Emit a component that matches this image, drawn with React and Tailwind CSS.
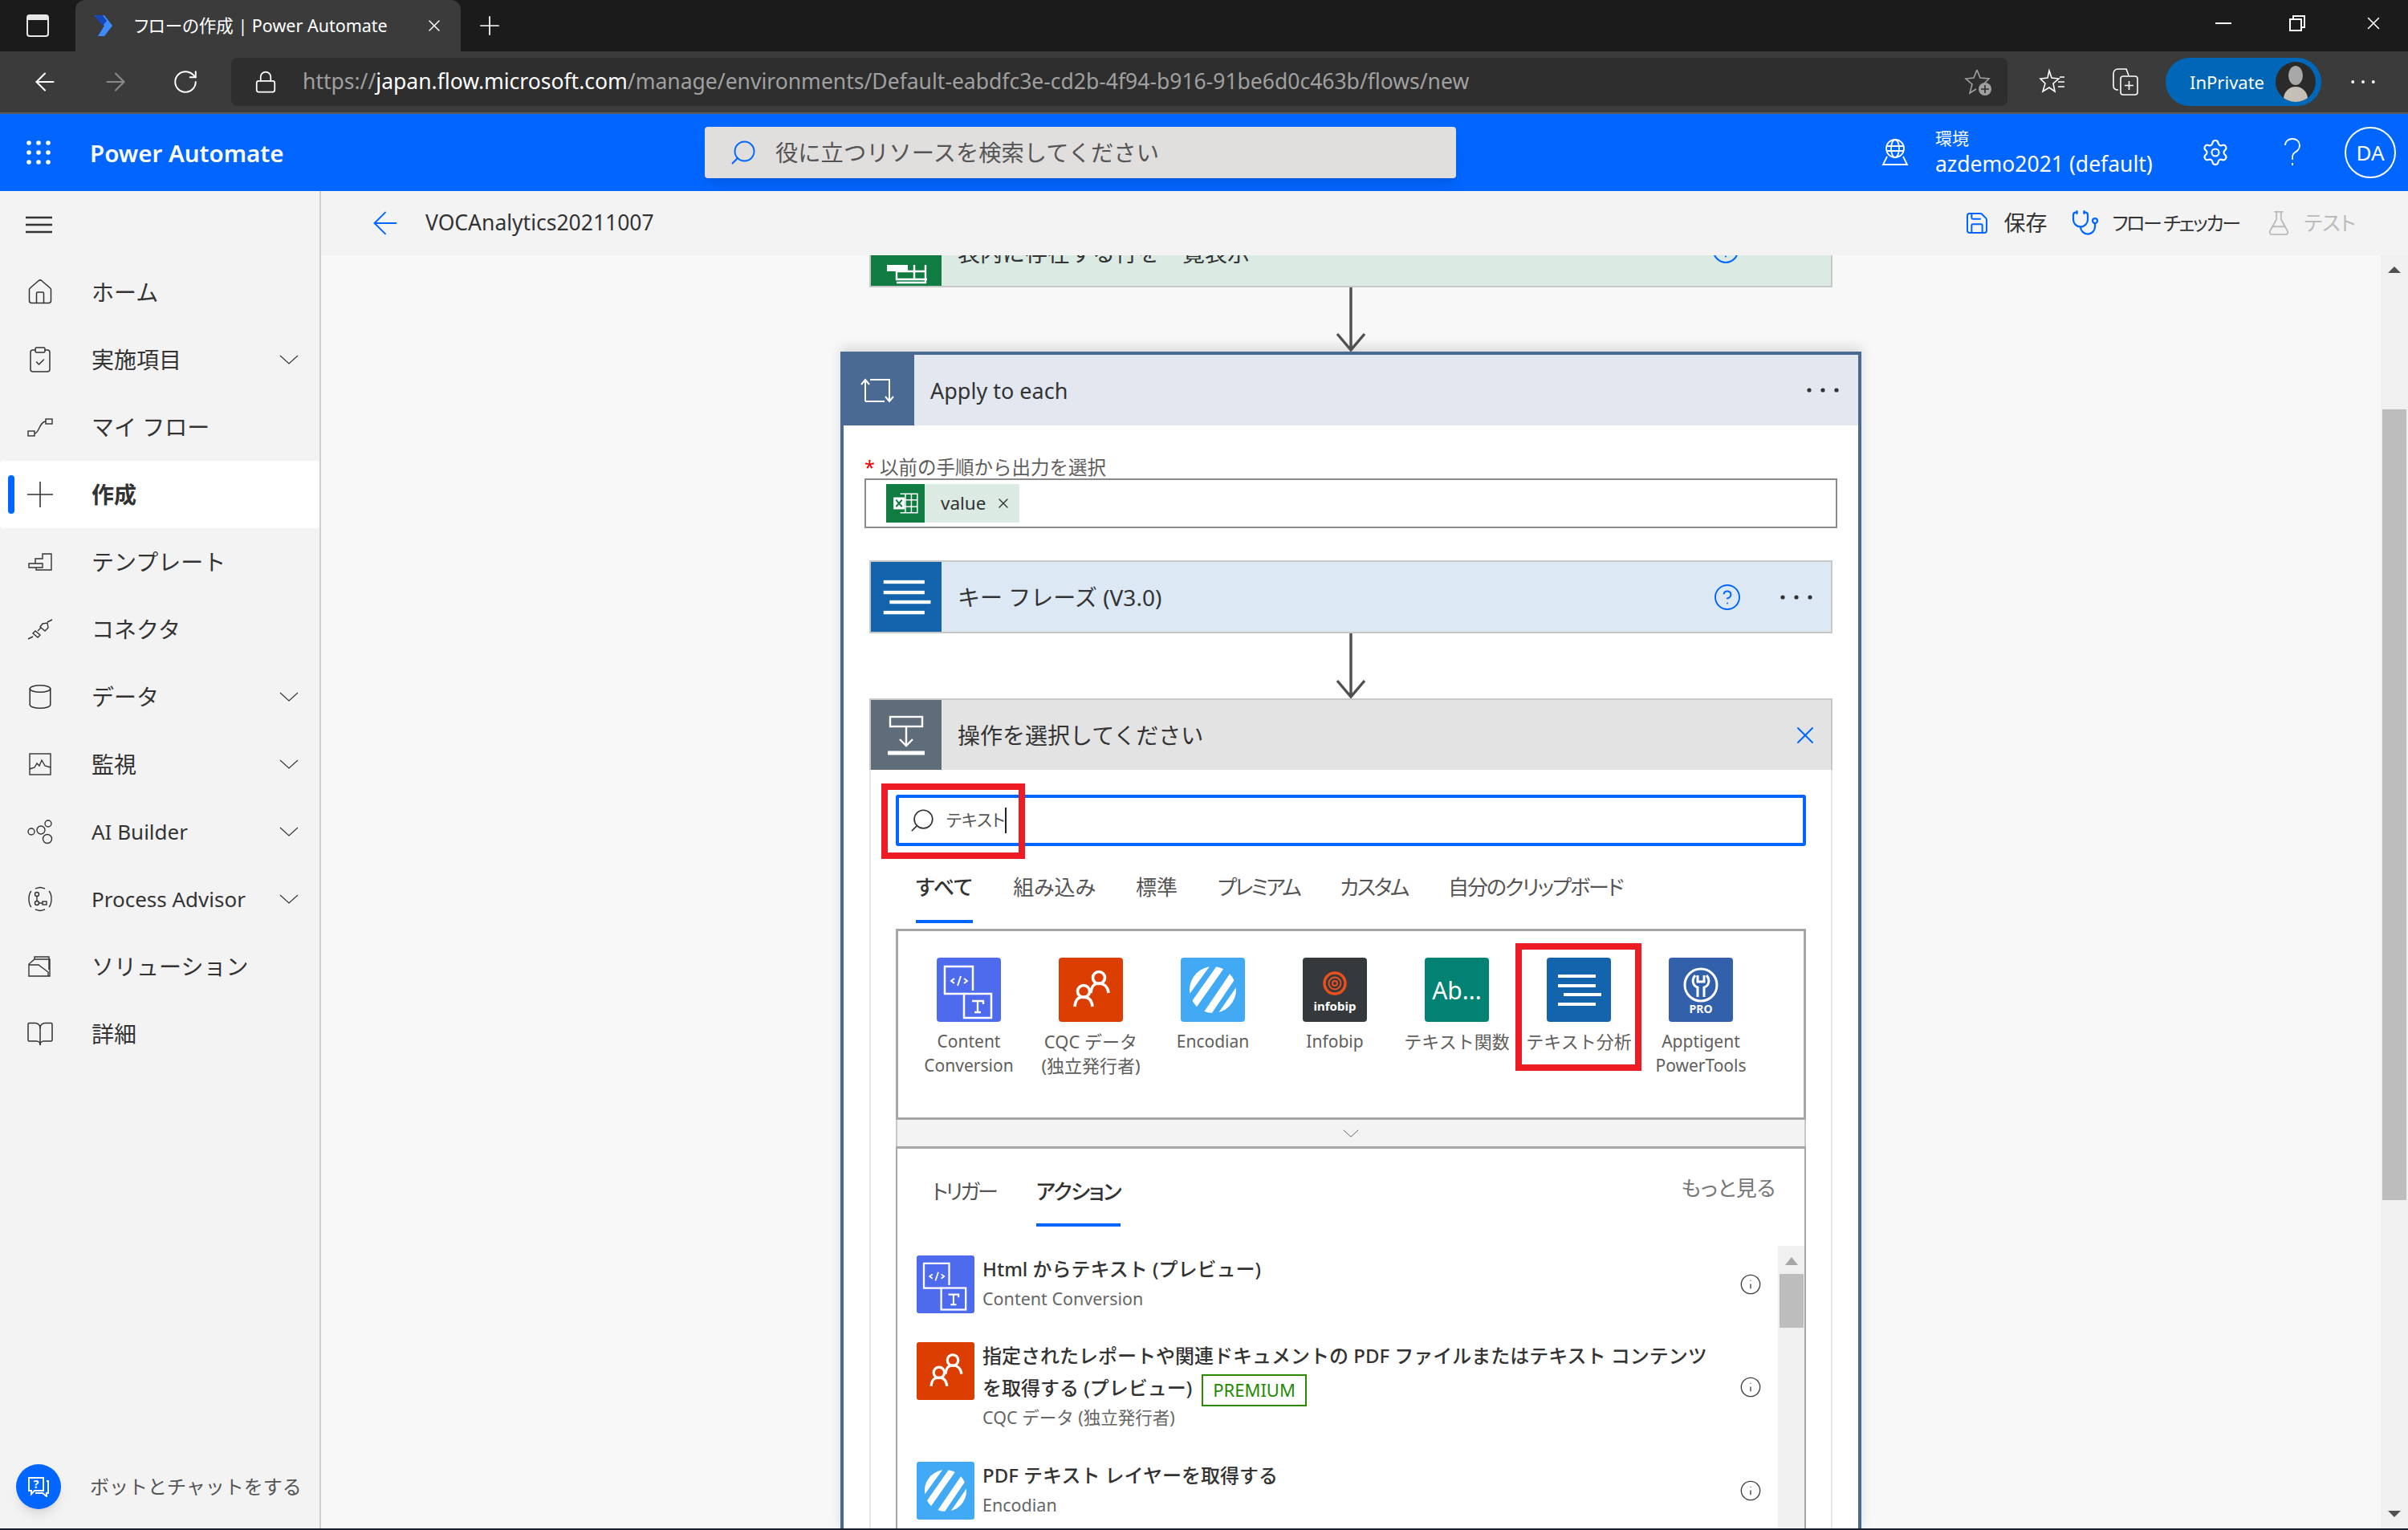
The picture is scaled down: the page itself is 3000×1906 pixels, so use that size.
import React from 'react';
import {
  ArrowLeft, ArrowRight, RotateCw, Lock, X, Plus, Home, ClipboardCheck, Cylinder, BookOpen,
  Settings, HelpCircle, Search, Save, Stethoscope, FlaskConical, Info,
} from 'lucide-react';

const NAV = [
  { label: 'ホーム', icon: <Home size={36} strokeWidth={1} /> },
  { label: '実施項目', icon: <ClipboardCheck size={36} strokeWidth={1} />, more: true },
  { label: 'マイ フロー', icon: <FlowIcon /> },
  { label: '作成', icon: <PlusThin />, active: true },
  { label: 'テンプレート', icon: <TemplateIcon /> },
  { label: 'コネクタ', icon: <PlugIcon /> },
  { label: 'データ', icon: <Cylinder size={34} strokeWidth={1.1} />, more: true },
  { label: '監視', icon: <MonitorIcon />, more: true },
  { label: 'AI Builder', icon: <BuilderIcon />, more: true, latin: true },
  { label: 'Process Advisor', icon: <AdvisorIcon />, more: true, latin: true },
  { label: 'ソリューション', icon: <SolutionIcon /> },
  { label: '詳細', icon: <BookOpen size={36} strokeWidth={1} /> },
];

function PlusThin() {
  return (
    <svg width="32" height="32" viewBox="0 0 32 32" stroke="currentColor" strokeWidth="1.6"><path d="M0 16h32M16 0v32" /></svg>
  );
}
function Chev({ width = 24, className = '' }) {
  return (
    <svg width={width} height={width / 2} viewBox="0 0 24 12" fill="none" stroke="currentColor" strokeWidth="1.1" className={className}><path d="M1 1l11 10L23 1" /></svg>
  );
}
function FlowIcon() {
  return (
    <svg width="32" height="32" viewBox="0 0 32 32" fill="none" stroke="currentColor" strokeWidth="1.4">
      <rect x="1" y="21" width="8" height="6" /><rect x="23" y="6" width="8" height="6" /><path d="M9 24c6 0 6-15 14-15" />
    </svg>
  );
}
function TemplateIcon() {
  return (
    <svg width="32" height="32" viewBox="0 0 32 32" fill="none" stroke="currentColor" strokeWidth="1.4">
      <path d="M2 23v-5h8v-6h9V6h11v20H11v-3zM11 23h8v-5h-9" />
    </svg>
  );
}
function PlugIcon() {
  return (
    <svg width="32" height="32" viewBox="0 0 32 32" fill="none" stroke="currentColor" strokeWidth="1.4">
      <path d="M1 28l6-3M31 4l-6 3M7 21l6 5 3-3-6-5zM16 13l6 5 4-4-1-6-6 1zM13 18l4-4" />
    </svg>
  );
}
function MonitorIcon() {
  return (
    <svg width="30" height="30" viewBox="0 0 30 30" fill="none" stroke="currentColor" strokeWidth="1.4">
      <rect x="2" y="2" width="26" height="26" /><path d="M2 21l6-2 3-5 3 3 3-7 4 7 7 2" />
    </svg>
  );
}
function BuilderIcon() {
  return (
    <svg width="34" height="34" viewBox="0 0 34 34" fill="none" stroke="currentColor" strokeWidth="1.4">
      <circle cx="6" cy="17" r="4" /><circle cx="18" cy="15" r="5" /><circle cx="27" cy="7" r="4" /><circle cx="26" cy="26" r="5.5" />
    </svg>
  );
}
function AdvisorIcon() {
  return (
    <svg width="34" height="34" viewBox="0 0 34 34" fill="none" stroke="currentColor" strokeWidth="1.4">
      <path d="M6 7C2 11 2 23 6 27M28 7c4 4 4 16 0 20M11 4c7-2 5-2 12 0M11 30c7 2 5 2 12 0" />
      <circle cx="13" cy="11" r="2.5" /><circle cx="13" cy="22" r="2.5" /><rect x="20" y="20" width="5" height="4" /><path d="M13 14v5M15 22h5" />
    </svg>
  );
}
function SolutionIcon() {
  return (
    <svg width="32" height="32" viewBox="0 0 32 32" fill="none" stroke="currentColor" strokeWidth="1.4">
      <path d="M2 28V13L9 7h19v21zM9 7v-3h18v16M2 14h12l12 9v5" />
    </svg>
  );
}
function DotsGrid({ className }) {
  return (
    <svg width="30" height="30" viewBox="0 0 30 30" fill="currentColor" className={className}>
      {[3, 15, 27].flatMap(y => [3, 15, 27].map(x => <circle key={`${x}-${y}`} cx={x} cy={y} r="2.8" />))}
    </svg>
  );
}
function DownArrow({ height }) {
  return (
    <svg width="38" height={height} viewBox={`0 0 38 ${height}`} fill="none" stroke="#505050" strokeWidth="3.4" className="mx-auto block">
      <path d={`M19 0V${height - 2}M2 ${height - 22}L19 ${height - 2}L36 ${height - 22}`} />
    </svg>
  );
}
function Dots({ className = '', fill = '#333' }) {
  return (
    <svg width="40" height="8" viewBox="0 0 40 8" fill={fill} className={className}>
      <circle cx="3" cy="4" r="2.6" /><circle cx="20" cy="4" r="2.6" /><circle cx="37" cy="4" r="2.6" />
    </svg>
  );
}
function ExcelMark({ size }) {
  return (
    <svg width={size} height={size} viewBox="0 0 32 32" fill="none" stroke="#fff" strokeWidth="1.4">
      <path d="M10 5h20v22H10M16 5v22M23 5v22M10 12h20M10 20h20" />
      <rect x="2" y="9" width="13" height="14" fill="#fff" stroke="none" />
      <path d="M5 12l7 8M12 12l-7 8" stroke="#107c41" strokeWidth="1.8" />
    </svg>
  );
}
function LoopIcon() {
  return (
    <svg width="42" height="32" viewBox="0 0 42 32" fill="none" stroke="#fff" strokeWidth="2">
      <path d="M6 30V3M1 9l5-6 5 6M12 3h24v27M31 24l5 6 5-6M30 30H6" />
    </svg>
  );
}
function QuestionMark() {
  return (
    <svg width="22" height="36" viewBox="0 0 22 36" fill="none" stroke="#fff" strokeWidth="1.8">
      <path d="M2 9c0-5 4-8 9-8s9 3 9 8-3 7-6 9-3 4-3 9M11 31v3" />
    </svg>
  );
}
function GlobeIcon() {
  return (
    <svg width="34" height="34" viewBox="0 0 34 34" fill="none" stroke="#fff" strokeWidth="1.8" className="ml-[530px] shrink-0">
      <circle cx="17" cy="12" r="11" /><ellipse cx="17" cy="12" rx="5" ry="11" /><path d="M6 9h22M6 15h22M7 22L2 32h30l-5-10" />
    </svg>
  );
}

/* ブラウザのツールバーアイコン */
function FavAddIcon() {
  return (
    <svg width="36" height="36" viewBox="0 0 36 36" fill="none" stroke="#a0a0a0" strokeWidth="1.6" className="mr-[18px]">
      <path d="M16 3l4 10 11 1-6 6" /><path d="M16 3l-4 10-10 1 8 7-3 11 8-5" />
      <circle cx="26" cy="27" r="8" fill="#a0a0a0" stroke="none" /><path d="M26 22v10M21 27h10" stroke="#2e2e2e" strokeWidth="1.6" />
    </svg>
  );
}
function FavListIcon() {
  return (
    <svg width="34" height="34" viewBox="0 0 34 34" fill="none" stroke="#fff" strokeWidth="1.6" className="ml-[39px] shrink-0">
      <path d="M13 3l3 9 9 1-7 6 2 10-7-5-8 5 3-10-6-6 9-1zM24 17h8M24 23h8M26 11h6" />
    </svg>
  );
}
function CollectionsIcon() {
  return (
    <svg width="34" height="36" viewBox="0 0 34 36" fill="none" stroke="#fff" strokeWidth="1.6" className="ml-[57px] shrink-0">
      <path d="M8 28c-4 0-6-2-6-5V8c0-3 2-6 6-6h10l3 8" />
      <rect x="11" y="11" width="21" height="23" rx="3" /><path d="M21.500 17v11M16 22.500h11" />
    </svg>
  );
}

/* コネクタのロゴ */
function ContentIcon() {
  return (
    <svg viewBox="0 0 80 80" className="h-full w-full" fill="none" stroke="#fff">
      <path d="M34 45H10V11h35v30" strokeWidth="2.5" />
      <rect x="34" y="45" width="34" height="30" strokeWidth="2.5" />
      <path d="M22 26l-4 3 4 3M34 26l4 3-4 3M30 23l-4 12" strokeWidth="2" />
      <path d="M44 54h14v4M51 54v14M47 68h8" strokeWidth="2.3" />
    </svg>
  );
}
function CqcIcon() {
  return (
    <svg viewBox="0 0 80 80" className="h-full w-full" fill="none" stroke="#fff" strokeWidth="3.6">
      <circle cx="50" cy="25" r="7.5" /><path d="M40 44c1-10 5-12 10-12s11 3 12 12" />
      <circle cx="31" cy="42" r="7.5" /><path d="M20 61c1-10 5-12 11-12s10 3 11 12" />
    </svg>
  );
}
function EncodianIcon() {
  return (
    <svg viewBox="0 0 80 80" className="h-full w-full">
      <defs>
        <clipPath id="enc"><circle cx="40" cy="40" r="29" /></clipPath>
      </defs>
      <g clipPath="url(#enc)" stroke="#fff" strokeWidth="9">
        <path d="M2 50L34 6M14 62L52 8M30 74L68 18M46 78L78 32" />
      </g>
    </svg>
  );
}
function InfobipIcon() {
  return (
    <div className="flex h-full w-full flex-col items-center justify-center">
      <svg viewBox="0 0 32 32" className="mt-1 h-8 w-8" fill="none" stroke="#e8501e">
        <circle cx="16" cy="16" r="13" strokeWidth="3.5" /><circle cx="16" cy="16" r="7.5" strokeWidth="2" /><circle cx="16" cy="16" r="3" strokeWidth="2" />
      </svg>
      <span className="mt-1 text-[15px] leading-4 font-bold text-white">infobip</span>
    </div>
  );
}
function KeyLines() {
  return (
    <svg viewBox="0 0 80 80" className="h-full w-full" fill="#fff">
      <rect x="14" y="21" width="47" height="4" /><rect x="14" y="33" width="47" height="4" />
      <rect x="21" y="44" width="47" height="4" /><rect x="14" y="56" width="47" height="4" />
    </svg>
  );
}
function ApptigentIcon() {
  return (
    <div className="flex h-full w-full flex-col items-center pt-3">
      <svg viewBox="0 0 44 44" className="h-11 w-11" fill="none" stroke="#fff" strokeWidth="3">
        <circle cx="22" cy="22" r="20" />
        <path d="M15 10c-5 6-3 13 3 15v12M29 10c5 6 3 13-3 15v12M18 10v8h8v-8" />
      </svg>
      <span className="text-[14px] leading-4 font-bold text-white">PRO</span>
    </div>
  );
}

const CONNECTORS = [
  { name: ['Content', 'Conversion'], bg: 'bg-[#4f6bed]', logo: <ContentIcon />, size: 'text-[21px]' },
  { name: ['CQC データ', '(独立発行者)'], bg: 'bg-[#dc3d00]', logo: <CqcIcon />, size: 'text-[22px]' },
  { name: ['Encodian'], bg: 'bg-[#42a9f5]', logo: <EncodianIcon />, size: 'text-[21px]' },
  { name: ['Infobip'], bg: 'bg-[#36393c]', logo: <InfobipIcon />, size: 'text-[21px]' },
  { name: ['テキスト関数'], bg: 'bg-[#018272]', logo: <span className="flex h-full items-center justify-center text-[30px] text-white">Ab...</span>, size: 'text-[22px]' },
  { name: ['テキスト分析'], bg: 'bg-[#1464ad]', logo: <KeyLines />, size: 'text-[22px]' },
  { name: ['Apptigent', 'PowerTools'], bg: 'bg-[#3360ab]', logo: <ApptigentIcon />, size: 'text-[21px]' },
];

function ActionRow({ bg, logo, title, sub, className }) {
  return (
    <div className={`flex gap-[10px] ${className}`}>
      <div className={`h-[72px] w-[72px] shrink-0 rounded-[3px] ${bg}`}>{logo}</div>
      <div className="-mt-[3px] w-[905px] shrink-0">
        <div className="text-[24px] leading-[40px] whitespace-nowrap text-[#333] [font-weight:500]">{title}</div>
        <div className="text-[21.5px] leading-[34px] text-[#666]">{sub}</div>
      </div>
      <Info size={28} strokeWidth={1.2} className="ml-[28px] shrink-0 self-center text-[#444]" />
    </div>
  );
}

export default function App() {
  return (
    <div className="flex h-[1906px] w-[3000px] flex-col overflow-hidden bg-[#f8f8f8] text-[#333] [font-family:'Noto_Sans','Noto_Sans_CJK_JP',sans-serif]">
      {/* ブラウザ */}
      <div className="flex h-16 shrink-0 items-end bg-[#1b1b1b] text-white">
        <div className="flex h-16 w-[94px] shrink-0 items-center justify-center">
          <div className="h-7 w-7 rounded-[4px] border-2 border-[#e8e8e8] border-t-[7px]" />
        </div>
        <div className="flex h-16 w-[480px] shrink-0 items-center rounded-t-xl bg-[#3b3b3b] px-[21px]">
          <svg width="33" height="26" viewBox="0 0 33 26" className="shrink-0">
            <path d="M2 0h13l10 13-10 13H7l8-13z" fill="#3d8bfd" /><path d="M2 0h11l5 7-5 6z" fill="#1746b8" />
          </svg>
          <span className="ml-[19px] flex-1 text-[21.5px] whitespace-nowrap [font-feature-settings:'palt']">フローの作成 | Power Automate</span>
          <X size={24} strokeWidth={1.5} />
        </div>
        <div className="flex h-16 w-[72px] shrink-0 items-center justify-center"><Plus size={38} strokeWidth={1.1} /></div>
        <div className="flex-1" />
        <div className="flex h-16 items-center gap-[72px] pr-[30px] pb-[6px]">
          <div className="h-[2px] w-5 bg-white" />
          <svg width="20" height="20" viewBox="0 0 20 20" fill="none" stroke="#fff" strokeWidth="2"><rect x="1" y="5" width="14" height="14" /><path d="M5 5V1h14v14h-4" /></svg>
          <X size={26} strokeWidth={1.4} />
        </div>
      </div>
      <div className="flex h-[78px] shrink-0 items-center border-b-2 border-[#5a5a5a] bg-[#3b3b3b] text-white">
        <div className="flex w-[288px] shrink-0 items-center gap-[52px] pl-[38px]">
          <ArrowLeft size={36} strokeWidth={1.4} />
          <ArrowRight size={36} strokeWidth={1.4} className="text-[#8a8a8a]" />
          <RotateCw size={34} strokeWidth={1.4} />
        </div>
        <div className="flex h-[60px] w-[2213px] shrink-0 items-center rounded-lg bg-[#2e2e2e]">
          <Lock size={30} strokeWidth={1.4} className="ml-[28px]" />
          <span className="ml-[31px] flex-1 text-[26.5px] whitespace-nowrap text-[#a0a0a0]">
            https://<span className="text-white">japan.flow.microsoft.com</span>/manage/environments/Default-eabdfc3e-cd2b-4f94-b916-91be6d0c463b/flows/new
          </span>
          <FavAddIcon />
        </div>
        <FavListIcon />
        <CollectionsIcon />
        <div className="ml-[33px] flex h-[60px] w-[194px] shrink-0 items-center rounded-full bg-[#0067b8] pl-[30px] text-[22px]">
          InPrivate
          <svg width="50" height="50" viewBox="0 0 50 50" className="ml-[14px] shrink-0">
            <defs><clipPath id="ava"><circle cx="25" cy="25" r="25" /></clipPath></defs>
            <g clipPath="url(#ava)">
              <rect width="50" height="50" fill="#2a2a2a" />
              <ellipse cx="25" cy="17" rx="9" ry="12" fill="#a8a8a8" />
              <ellipse cx="25" cy="46" rx="15" ry="15" fill="#c4c0b8" />
            </g>
          </svg>
        </div>
        <Dots className="ml-[32px] scale-75" fill="#fff" />
      </div>

      {/* ヘッダー */}
      <header className="flex h-24 shrink-0 items-center bg-[#0066ff] text-white">
        <DotsGrid className="ml-[33px] shrink-0" />
        <span className="ml-[49px] w-[766px] shrink-0 pt-[2px] text-[29.5px] font-semibold">Power Automate</span>
        <div className="flex h-16 w-[936px] shrink-0 items-center rounded-[4px] bg-[#e1dfdd] text-[28.3px] text-[#555] shadow-lg">
          <Search size={36} strokeWidth={1.3} className="mr-[22px] ml-[30px] -scale-x-100 text-[#0066ff]" />
          役に立つリソースを検索してください
        </div>
        <GlobeIcon />
        <div className="ml-[33px] w-[280px] shrink-0 leading-none">
          <div className="mb-2 text-[21px]">環境</div>
          <div className="text-[26.5px] whitespace-nowrap">azdemo2021 (default)</div>
        </div>
        <Settings size={36} strokeWidth={1.4} className="ml-[51px] shrink-0" />
        <div className="ml-[67px] shrink-0"><QuestionMark /></div>
        <div className="ml-[54px] flex h-16 w-16 shrink-0 items-center justify-center rounded-full border-2 border-white text-[26px]">DA</div>
      </header>

      <div className="flex min-h-0 flex-1">
        {/* サイドバー */}
        <aside className="relative flex w-[400px] shrink-0 flex-col border-r-2 border-[#d0d0d0] bg-[#f3f3f3]">
          <div className="flex h-[84px] shrink-0 items-center pl-8">
            <svg width="33" height="22" viewBox="0 0 33 22" stroke="#333" strokeWidth="2.4"><path d="M0 2h33M0 11h33M0 20h33" /></svg>
          </div>
          {NAV.map(n => (
            <div key={n.label} className={`flex h-[84px] shrink-0 items-center rounded-[4px] ${n.active ? 'bg-white font-bold' : ''}`}>
              <div className={`ml-[10px] h-12 w-2 rounded-full ${n.active ? 'bg-[#0066ff]' : ''}`} />
              <div className="mr-[32px] flex w-[64px] justify-center text-[#333]">{n.icon}</div>
              <span className={`w-[234px] whitespace-nowrap ${n.latin ? 'text-[26px]' : 'text-[28px]'}`}>{n.label}</span>
              {n.more && <Chev />}
            </div>
          ))}
          <div className="absolute bottom-[24px] left-5 flex items-center">
            <div className="flex h-14 w-14 items-center justify-center rounded-full bg-[#0066ff] shadow-lg">
              <svg width="26" height="26" viewBox="0 0 26 26" fill="none" stroke="#fff" strokeWidth="2">
                <path d="M1 2h18v16H8l-4 4v-4H1zM23 6h2v15h-2v4l-5-4H9" />
                <text x="10" y="15" fontSize="14" fontWeight="700" fill="#fff" stroke="none" textAnchor="middle">?</text>
              </svg>
            </div>
            <span className="ml-[36px] text-[24px] whitespace-nowrap text-[#555]">ボットとチャットをする</span>
          </div>
        </aside>

        <main className="flex min-w-0 flex-1 flex-col">
          <div className="flex h-20 shrink-0 items-center bg-[#f3f3f3]">
            <ArrowLeft size={46} strokeWidth={1} className="ml-[57px] text-[#0066ff]" />
            <span className="ml-[27px] flex-1 text-[26.5px]">VOCAnalytics20211007</span>
            <Save size={32} strokeWidth={1.5} className="text-[#0066ff]" />
            <span className="ml-[18px] text-[27px]">保存</span>
            <Stethoscope size={36} strokeWidth={1.5} className="ml-[29px] text-[#0066ff]" />
            <span className="ml-[16px] text-[24px] tracking-[-2.4px] [font-feature-settings:'palt']">フロー チェッカー</span>
            <FlaskConical size={34} strokeWidth={1.3} className="ml-[32px] text-[#bbb]" />
            <span className="mr-[65px] ml-[15px] text-[25px] text-[#bbb] [font-feature-settings:'palt']">テスト</span>
          </div>

          <div className="flex min-h-0 flex-1">
            <div className="min-w-0 flex-1 overflow-hidden bg-[#f8f8f8]">
              <div className="relative ml-[683px] w-[1200px]">
                {/* 上のカード (見切れ) */}
                <div className="flex h-10 border-2 border-t-0 border-[#c8c8c8] bg-[#dbeae3]">
                  <div className="flex w-[88px] shrink-0 items-end justify-center overflow-hidden bg-[#107c41] pb-[2px]">
                    <svg width="52" height="24" viewBox="0 0 52 24" fill="none" stroke="#fff" strokeWidth="2.4"><path d="M14 0v18h38M36 0v18M50 0v22H14M14 8h36" /><rect x="2" y="-10" width="26" height="18" fill="#fff" stroke="none" /></svg>
                  </div>
                  <span className="-mt-[24px] ml-5 flex-1 text-[28px] text-[#333]">表内に存在する行を一覧表示</span>
                  <HelpCircle size={36} strokeWidth={1.4} className="-mt-[24px] mr-[113px] text-[#0066ff]" />
                </div>
                <DownArrow height={80} />

                {/* Apply to each */}
                <div className="-mx-[36px] h-[1470px] border-x-[4px] border-t-[4px] border-[#4a6a94] bg-white shadow-[0_-6px_14px_rgba(0,0,0,0.12)]">
                  <div className="-ml-[4px] flex h-[88px] items-center bg-[#e3e7f0]">
                    <div className="flex h-full w-[92px] items-center justify-center bg-[#4a6a94]"><LoopIcon /></div>
                    <span className="ml-5 flex-1 pt-[2px] text-[27px]">Apply to each</span>
                    <Dots className="mr-6" />
                  </div>
                  <div className="mx-[26px] mt-[40px] text-[23.5px] leading-6 text-[#605e5c]"><span className="text-[#e00]">*</span> 以前の手順から出力を選択</div>
                  <div className="mx-[26px] mt-[2px] flex h-[62px] items-center border-2 border-[#8a8a8a] bg-white pl-[25px]">
                    <div className="flex h-12 items-center bg-[#dbeae3] pr-[10px]">
                      <div className="flex h-12 w-12 items-center justify-center bg-[#107c41]"><ExcelMark size={34} /></div>
                      <span className="ml-5 text-[22.500px]">value</span>
                      <X size={20} strokeWidth={1.6} className="ml-[12px]" />
                    </div>
                  </div>

                  <div className="mx-[32px] mt-[40px] flex h-[91px] border-2 border-[#c8c8c8] bg-[#dce8f4]">
                    <div className="w-[88px] shrink-0 bg-[#1464ad]"><KeyLines /></div>
                    <span className="ml-5 flex-1 self-center text-[28px]">キー フレーズ (V3.0)</span>
                    <HelpCircle size={36} strokeWidth={1.3} className="mr-[48px] self-center text-[#0066ff]" />
                    <Dots className="mr-[23px] self-center" />
                  </div>
                  <DownArrow height={81} />

                  {/* 操作を選択 */}
                  <div className="mx-[32px] h-[1100px] border-x-2 border-[#e6e6e6] bg-white">
                    <div className="-mx-[2px] flex h-[89px] border-2 border-b-0 border-[#c8c8c8] bg-[#e3e3e3]">
                      <div className="flex w-[88px] shrink-0 items-center justify-center bg-[#5f6d7a] text-white">
                        <svg width="46" height="52" viewBox="0 0 46 52" fill="none" stroke="#fff" strokeWidth="2.4">
                          <rect x="3" y="3" width="40" height="12" /><path d="M23 15v24M15 31l8 8 8-8" /><path d="M0 48h46" strokeWidth="5" />
                        </svg>
                      </div>
                      <span className="ml-5 flex-1 self-center text-[28px]">操作を選択してください</span>
                      <X size={36} strokeWidth={1.3} className="mr-[14px] self-center text-[#0066ff]" />
                    </div>

                    <div className="relative mx-[31px] mt-[31px] flex h-16 items-center rounded-[3px] border-[4px] border-[#0066ff]">
                      <Search size={34} strokeWidth={1.2} className="ml-[12px] -scale-x-100 text-[#333]" />
                      <span className="ml-[13px] text-[21px] text-[#555] [font-feature-settings:'palt']">テキスト</span>
                      <div className="h-8 w-[2px] bg-[#222]" />
                    </div>

                    <div className="mx-[31px] mt-[22px] flex h-[74px] gap-[50px] pl-[25px] text-[26px] text-[#555] [font-feature-settings:'palt']">
                      <div className="h-[74px] border-b-[4px] border-[#0066ff] pt-[10px] text-[#333] [font-weight:500]">すべて</div>
                      <div className="pt-[10px]">組み込み</div>
                      <div className="pt-[10px]">標準</div>
                      <div className="pt-[10px] tracking-[-2.600px]">プレミアム</div>
                      <div className="pt-[10px] tracking-[-2.400px]">カスタム</div>
                      <div className="pt-[10px] tracking-[-2px]">自分のクリップボード</div>
                    </div>

                    <div className="mx-[31px] mt-[7px] flex h-[238px] border-[3px] border-[#a6a6a6] pt-[33px] pl-[12px]">
                      {CONNECTORS.map(c => (
                        <div key={c.name[0]} className="flex w-[152px] flex-col items-center">
                          <div className={`h-20 w-20 rounded-[4px] ${c.bg}`}>{c.logo}</div>
                          <div className={`mt-[9px] text-center leading-[30px] whitespace-nowrap text-[#605e5c] ${c.size}`}>
                            {c.name.map(line => <div key={line}>{line}</div>)}
                          </div>
                        </div>
                      ))}
                    </div>
                    <div className="mx-[31px] flex h-[33px] items-center justify-center border-x-2 border-[#c8c8c8] bg-[#f3f3f3]">
                      <Chev width={20} className="text-[#555]" />
                    </div>

                    <div className="relative mx-[31px] h-[520px] border-x-2 border-t-[3px] border-[#a6a6a6]">
                      <div className="flex h-[120px] items-start pl-[43px] text-[26px] [font-feature-settings:'palt']">
                        <div className="pt-[34px] tracking-[-3px] text-[#555]">トリガー</div>
                        <div className="ml-[50px] h-[97px] border-b-[4px] border-[#0066ff] pt-[34px] tracking-[-1.500px] [font-weight:500]">アクション</div>
                        <div className="ml-auto pt-[30px] pr-[36px] text-[26px] text-[#777]">もっと見る</div>
                      </div>
                      <ActionRow className="mt-[13px] ml-[24px]" bg="bg-[#4f6bed]" logo={<ContentIcon />} title="Html からテキスト (プレビュー)" sub="Content Conversion" />
                      <ActionRow
                        className="mt-[36px] ml-[24px]"
                        bg="bg-[#dc3d00]"
                        logo={<CqcIcon />}
                        title={
                          <>
                            指定されたレポートや関連ドキュメントの PDF ファイルまたはテキスト コンテンツ
                            <br />
                            を取得する (プレビュー)
                            <span className="-my-[3px] ml-3 inline-block h-10 border-[2px] border-[#2b8a00] px-3 align-middle text-[22px] leading-[34px] font-normal text-[#1f8a00]">PREMIUM</span>
                          </>
                        }
                        sub="CQC データ (独立発行者)"
                      />
                      <ActionRow className="mt-[38px] ml-[24px]" bg="bg-[#42a9f5]" logo={<EncodianIcon />} title="PDF テキスト レイヤーを取得する" sub="Encodian" />
                      <div className="absolute top-[121px] right-0 bottom-0 w-[33px] bg-[#f0f0f0]">
                        <div className="mx-auto mt-[14px] h-0 w-0 border-x-[8px] border-b-[10px] border-x-transparent border-b-[#a6a6a6]" />
                        <div className="mx-auto mt-[11px] h-[67px] w-[30px] bg-[#bdbdbd]" />
                      </div>
                    </div>
                  </div>
                </div>

                {/* 赤枠の注記 */}
                <div className="absolute top-[658px] left-[15px] h-[94px] w-[179px] border-[8px] border-[#ed1c24]" />
                <div className="absolute top-[857px] left-[805px] h-[159px] w-[157px] border-[8px] border-[#ed1c24]" />
              </div>
            </div>
            {/* ページのスクロールバー */}
            <div className="w-[34px] shrink-0 bg-[#f0f0f0]">
              <div className="mx-auto mt-[14px] h-0 w-0 border-x-[8px] border-b-[8px] border-x-transparent border-b-[#505050]" />
              <div className="mx-auto mt-[170px] h-[985px] w-[30px] bg-[#bdbdbd]" />
              <div className="mx-auto mt-[387px] h-0 w-0 border-x-[8px] border-t-[8px] border-x-transparent border-t-[#505050]" />
            </div>
          </div>
        </main>
      </div>
      <div className="h-[2px] shrink-0 bg-[#1a1f2e]" />
    </div>
  );
}
